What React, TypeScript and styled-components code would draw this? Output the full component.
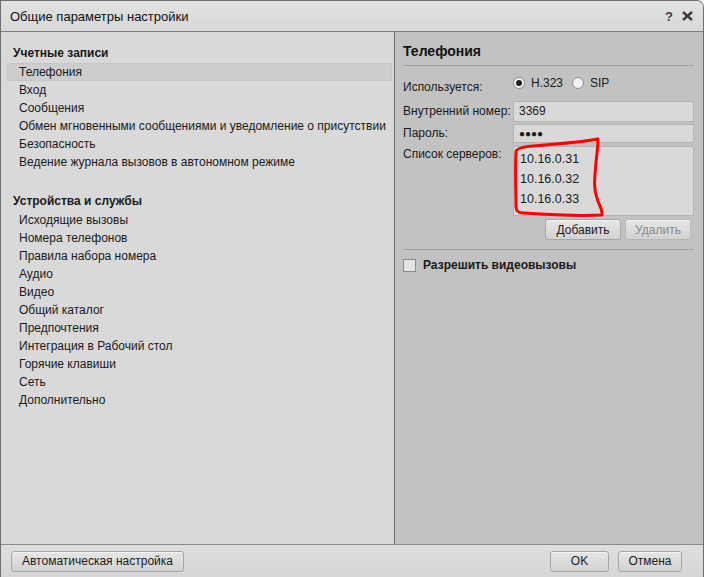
import React, { useState } from 'react';
import styled, { createGlobalStyle } from 'styled-components';

const GlobalStyle = createGlobalStyle`
  html, body { margin: 0; padding: 0; background: #ffffff; }
  body { font-family: "Liberation Sans", Arial, sans-serif; font-size: 12px; color: #1a1a1a; }
  * { box-sizing: border-box; }
`;

const Window = styled.div`
  width: 704px;
  height: 577px;
  display: flex;
  flex-direction: column;
  border: 1px solid #6e6e6e;
  border-bottom: none;
  border-top-right-radius: 7px;
  overflow: hidden;
  background: #dadada;
`;

const TitleBar = styled.div`
  height: 31px;
  flex: none;
  display: flex;
  align-items: center;
  padding: 0 9px;
  background: linear-gradient(#e2e2e2, #d8d8d8);
  border-bottom: 1px solid #7c7c7c;
`;

const Title = styled.div`
  flex: 1;
  font-size: 13px;
  color: #111;
`;

const TitleButtons = styled.div`
  display: flex;
  align-items: center;
  gap: 9px;
  padding-right: 1px;
  color: #444;
`;

const HelpMark = styled.span`
  font-weight: bold;
  font-size: 13px;
  color: #3c3c3c;
`;

const Body = styled.div`
  flex: 1;
  display: flex;
  min-height: 0;
`;

const Sidebar = styled.div`
  width: 394px;
  flex: none;
  background: #d9d9d9;
  border-right: 1px solid #6f6f6f;
  padding: 12px 2px 0 6px;
`;

const GroupTitle = styled.div<{ $gap?: boolean }>`
  height: 19px;
  line-height: 18px;
  padding-left: 6px;
  font-weight: bold;
  margin-top: ${(p) => (p.$gap ? '21px' : '0')};
`;

const NavItem = styled.div<{ $active?: boolean }>`
  height: 18px;
  line-height: 16px;
  padding-left: 11px;
  border: 1px solid ${(p) => (p.$active ? '#c6c6c6' : 'transparent')};
  background: ${(p) => (p.$active ? '#cdcdcd' : 'transparent')};
  white-space: nowrap;
`;

const Detail = styled.div`
  flex: 1;
  background: #c2c2c2;
  padding: 8px 9px 0 8px;
`;

const DetailTitle = styled.div`
  height: 22px;
  line-height: 22px;
  font-size: 14px;
  font-weight: bold;
  color: #111;
`;

const Separator = styled.div<{ $top: number; $bottom: number }>`
  height: 1px;
  background: #a2a2a2;
  margin-top: ${(p) => p.$top}px;
  margin-bottom: ${(p) => p.$bottom}px;
`;

const FormRow = styled.div<{ $mt?: number }>`
  display: grid;
  grid-template-columns: 110px 1fr;
  align-items: start;
  margin-top: ${(p) => p.$mt ?? 0}px;
`;

const Label = styled.div<{ $pt?: number }>`
  padding-top: ${(p) => p.$pt ?? 3}px;
  line-height: 15px;
  white-space: nowrap;
`;

const RadioGroup = styled.div`
  display: flex;
  align-items: center;
  height: 14px;
  gap: 6px;
`;

const RadioOption = styled.label`
  display: flex;
  align-items: center;
  gap: 6px;
  margin-right: 3px;
`;

const RadioCircle = styled.span<{ $checked?: boolean }>`
  width: 12px;
  height: 12px;
  border-radius: 50%;
  border: 1px solid #8c8c8c;
  background: #f2f2f2;
  display: flex;
  align-items: center;
  justify-content: center;
  &::after {
    content: '';
    width: 6px;
    height: 6px;
    border-radius: 50%;
    background: ${(p) => (p.$checked ? '#1e1e1e' : 'transparent')};
  }
`;

const TextBox = styled.div<{ $h: number }>`
  height: ${(p) => p.$h}px;
  background: #d9d9d9;
  border: 1px solid #b4b4b4;
  padding-left: 5px;
  line-height: ${(p) => p.$h - 2}px;
`;

const Dots = styled.span`
  font-size: 10px;
`;

const ServerList = styled.div`
  position: relative;
  height: 70px;
  background: #d9d9d9;
  border: 1px solid #b4b4b4;
  padding: 2px 0 0 6px;
`;

const ServerItem = styled.div`
  height: 20px;
  line-height: 20px;
  font-size: 12.5px;
`;

const Annotation = styled.svg`
  position: absolute;
  left: -11px;
  top: -11px;
  overflow: visible;
  pointer-events: none;
`;

const ButtonRow = styled.div`
  display: flex;
  justify-content: flex-end;
  gap: 4px;
  margin-top: 3px;
  padding-right: 3px;
`;

const Button = styled.button<{ $w: number; $disabled?: boolean }>`
  width: ${(p) => p.$w}px;
  height: 21px;
  padding: 0;
  font-family: inherit;
  font-size: 12px;
  color: ${(p) => (p.$disabled ? '#8a8a8a' : '#1a1a1a')};
  border: 1px solid ${(p) => (p.$disabled ? '#b8b8b8' : '#a6a6a6')};
  border-radius: 3px;
  background: linear-gradient(#e6e6e6, #d2d2d2);
  box-shadow: inset 0 1px 0 #f4f4f4;
`;

const CheckRow = styled.label`
  display: flex;
  align-items: center;
  gap: 7px;
  font-weight: bold;
`;

const CheckBox = styled.span`
  width: 13px;
  height: 13px;
  border: 1px solid #8a8a8a;
  background: #e4e4e4;
`;

const Footer = styled.div`
  height: 33px;
  flex: none;
  display: flex;
  align-items: center;
  padding: 0 21px 0 10px;
  border-top: 1px solid #8a8a8a;
  background: linear-gradient(#dedede, #d6d6d6);
`;

const FooterSpacer = styled.div`
  flex: 1;
`;

const FooterButtons = styled.div`
  display: flex;
  gap: 9px;
`;

const accounts = [
  'Телефония',
  'Вход',
  'Сообщения',
  'Обмен мгновенными сообщениями и уведомление о присутствии',
  'Безопасность',
  'Ведение журнала вызовов в автономном режиме',
];

const devices = [
  'Исходящие вызовы',
  'Номера телефонов',
  'Правила набора номера',
  'Аудио',
  'Видео',
  'Общий каталог',
  'Предпочтения',
  'Интеграция в Рабочий стол',
  'Горячие клавиши',
  'Сеть',
  'Дополнительно',
];

const servers = ['10.16.0.31', '10.16.0.32', '10.16.0.33'];

export default function App() {
  const [selected, setSelected] = useState('Телефония');
  const [protocol, setProtocol] = useState('h323');

  return (
    <>
      <GlobalStyle />
      <Window>
        <TitleBar>
          <Title>Общие параметры настройки</Title>
          <TitleButtons>
            <HelpMark>?</HelpMark>
            <svg width="11" height="10" viewBox="0 0 11 10">
              <path d="M1 1 L10 9 M10 1 L1 9" stroke="#3c3c3c" strokeWidth="2.4" />
            </svg>
          </TitleButtons>
        </TitleBar>

        <Body>
          <Sidebar>
            <GroupTitle>Учетные записи</GroupTitle>
            {accounts.map((a) => (
              <NavItem key={a} $active={selected === a} onClick={() => setSelected(a)}>
                {a}
              </NavItem>
            ))}
            <GroupTitle $gap>Устройства и службы</GroupTitle>
            {devices.map((d) => (
              <NavItem key={d} $active={selected === d} onClick={() => setSelected(d)}>
                {d}
              </NavItem>
            ))}
          </Sidebar>

          <Detail>
            <DetailTitle>Телефония</DetailTitle>
            <Separator $top={3} $bottom={10} />

            <FormRow>
              <Label $pt={4}>Используется:</Label>
              <RadioGroup>
                <RadioOption onClick={() => setProtocol('h323')}>
                  <RadioCircle $checked={protocol === 'h323'} />
                  H.323
                </RadioOption>
                <RadioOption onClick={() => setProtocol('sip')}>
                  <RadioCircle $checked={protocol === 'sip'} />
                  SIP
                </RadioOption>
              </RadioGroup>
            </FormRow>

            <FormRow $mt={6}>
              <Label>Внутренний номер:</Label>
              <TextBox $h={21}>3369</TextBox>
            </FormRow>

            <FormRow $mt={2}>
              <Label $pt={2}>Пароль:</Label>
              <TextBox $h={19}>
                <Dots>●●●●</Dots>
              </TextBox>
            </FormRow>

            <FormRow $mt={3}>
              <Label $pt={1}>Список серверов:</Label>
              <ServerList>
                {servers.map((s) => (
                  <ServerItem key={s}>{s}</ServerItem>
                ))}
                <Annotation width="112" height="92" viewBox="0 0 112 92">
                  <path
                    d="M13 16 C13 13 18 11 30 10 C55 8 80 6 95 3 C95 10 94 18 93 26 C92 40 90 52 94 62 C96 70 100 74 99 79 C80 80 50 79 20 77 C15 77 13 75 13 70 C13 55 12 35 13 16 Z"
                    fill="none"
                    stroke="#ff0000"
                    strokeWidth="3"
                    strokeLinejoin="round"
                  />
                </Annotation>
              </ServerList>
            </FormRow>

            <ButtonRow>
              <Button $w={76}>Добавить</Button>
              <Button $w={66} $disabled>
                Удалить
              </Button>
            </ButtonRow>

            <Separator $top={9} $bottom={8} />

            <CheckRow>
              <CheckBox />
              Разрешить видеовызовы
            </CheckRow>
          </Detail>
        </Body>

        <Footer>
          <Button $w={173}>Автоматическая настройка</Button>
          <FooterSpacer />
          <FooterButtons>
            <Button $w={59}>OK</Button>
            <Button $w={64}>Отмена</Button>
          </FooterButtons>
        </Footer>
      </Window>
    </>
  );
}
